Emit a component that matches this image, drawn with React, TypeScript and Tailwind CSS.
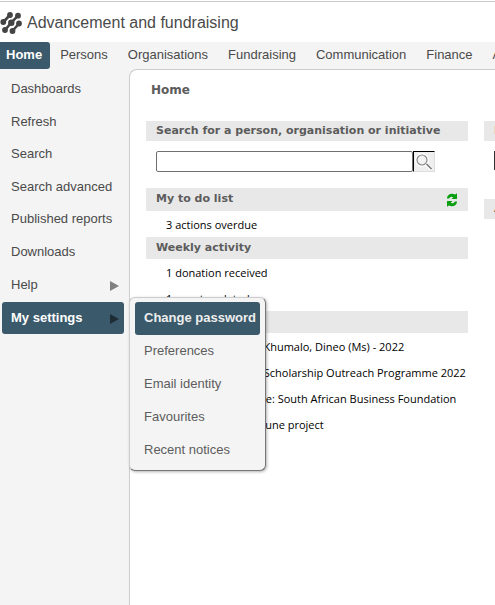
import type { ReactNode } from "react";

const tabs = ["Home", "Persons", "Organisations", "Fundraising", "Communication", "Finance", "Administration"];
const sideLinks = ["Dashboards", "Refresh", "Search", "Search advanced", "Published reports", "Downloads"];
const settings = ["Change password", "Preferences", "Email identity", "Favourites", "Recent notices"];

function Logo() {
  return (
    <svg viewBox="0 0 22 22" className="size-[22px] shrink-0" fill="#444" stroke="none" aria-hidden="true">
      <path d="M10 3 L3.300 10 M18 3.700 L11.300 10.700 L5 18 M19 11.500 L12.500 19" stroke="#444" strokeWidth="2.600" fill="none" />
      <circle cx="10" cy="3" r="2.900" />
      <circle cx="18" cy="3.700" r="2.900" />
      <circle cx="3.300" cy="10" r="2.900" />
      <circle cx="11.300" cy="10.700" r="3.200" />
      <circle cx="19" cy="11.500" r="2.900" />
      <circle cx="5" cy="18" r="2.900" />
      <circle cx="12.500" cy="19" r="2.900" />
    </svg>
  );
}

function Magnifier() {
  return (
    <svg viewBox="0 0 20 20" className="size-5 shrink-0" fill="none" aria-hidden="true">
      <circle cx="8" cy="8" r="5.500" stroke="#fff" strokeWidth="3" />
      <circle cx="8" cy="8" r="5" fill="#f4f4f4" stroke="#8a8a8a" strokeWidth="1.200" />
      <path d="M12 12 L17 17" stroke="#fff" strokeWidth="3.500" />
      <path d="M12.500 12 L17.500 17" stroke="#777" strokeWidth="1.600" />
    </svg>
  );
}

function RefreshIcon() {
  return (
    <svg viewBox="0 0 12 14" className="h-3.5 w-3" fill="#0a9e12" aria-hidden="true">
      <path d="M1 5.500 C1 1.500 5.500 -0.500 9 1.500 L11 0.300 V6 H5.500 L7.200 4.200 C5.500 3 4 3.800 3.200 5.500 Z" />
      <path d="M11 8.500 C11 12.500 6.500 14.500 3 12.500 L1 13.700 V8 H6.500 L4.800 9.800 C6.500 11 8 10.200 8.800 8.500 Z" />
    </svg>
  );
}

function Arrow({ className }: { className: string }) {
  return (
    <svg viewBox="0 0 10 10" className={"size-2.5 " + className} fill="currentColor" aria-hidden="true">
      <path d="M1 0 L10 5 L1 10 Z" />
    </svg>
  );
}

function Bar({ children, className = "h-[22px]" }: { children?: ReactNode; className?: string }) {
  return (
    <h2
      className={
        "flex items-center justify-between bg-[#e8e8e8] px-2.5 font-['Verdana','DejaVu_Sans',sans-serif] text-[11px] font-bold whitespace-nowrap text-[#5c5c5c] " +
        className
      }
    >
      {children}
    </h2>
  );
}

function Rows({ items }: { items: string[] }) {
  return (
    <ul>
      {items.map((t) => (
        <li key={t} className="h-[26px] pl-5 text-[11px] leading-7 whitespace-nowrap text-black">
          {t}
        </li>
      ))}
    </ul>
  );
}

export default function App() {
  return (
    <div className="flex min-h-screen flex-col overflow-hidden bg-white font-['Liberation_Sans',Arial,sans-serif] text-[13px] text-[#4a4a4a]">
      <header className="mt-px flex h-[41px] items-center gap-[5px] border-t border-[#ccc] pt-0.5">
        <Logo />
        <h1 className="text-base">Advancement and fundraising</h1>
      </header>
      <nav className="flex h-[27px] overflow-hidden bg-[#f4f4f4]">
        {tabs.map((t, i) => (
          <a
            key={t}
            href="#"
            className={
              i === 0
                ? "shrink-0 rounded-r-[3px] bg-[#3a596b] pr-2 pl-1.5 leading-[26px] font-bold text-white"
                : "shrink-0 px-2.5 leading-[26px]"
            }
          >
            {t}
          </a>
        ))}
      </nav>
      <div className="flex flex-1 bg-[#f4f4f4]">
        <aside className="w-[129px] shrink-0 pt-[5px] pr-[5px] pl-0.5">
          <ul className="flex h-[260px] flex-col justify-between">
            {sideLinks.map((t) => (
              <li key={t}>
                <a href="#" className="block h-8 pl-[9px] leading-[30px] whitespace-nowrap">
                  {t}
                </a>
              </li>
            ))}
            <li>
              <a href="#" className="flex h-8 items-center justify-between pr-[5px] pl-[9px] leading-[30px]">
                Help
                <Arrow className="mt-0.5 text-[#808080]" />
              </a>
            </li>
            <li className="relative">
              <a
                href="#"
                className="flex h-8 items-center justify-between rounded-[3px] bg-[#3a596b] pr-[5px] pl-[9px] leading-[30px] font-bold text-white"
              >
                My settings
                <Arrow className="mt-0.5 text-[#1d2c35]" />
              </a>
              <ul className="absolute -top-[5px] left-[127px] z-10 flex h-[174px] w-[137px] flex-col justify-between rounded-[6px] border border-[#ccc] border-r-[#777] border-b-[#777] bg-[#f4f4f4] px-[5px] py-1 shadow-[1px_1px_3px_rgba(0,0,0,0.3)]">
                {settings.map((t, i) => (
                  <li key={t}>
                    <a
                      href="#"
                      className={
                        i === 0
                          ? "block h-[33px] rounded-[3px] bg-[#3a596b] pl-[9px] leading-8 font-bold whitespace-nowrap text-[#eee]"
                          : "block h-[33px] pl-[9px] leading-[31px] whitespace-nowrap text-[#5c5c5c]"
                      }
                    >
                      {t}
                    </a>
                  </li>
                ))}
              </ul>
            </li>
          </ul>
        </aside>
        <main className="min-w-0 flex-1 overflow-hidden rounded-tl-[8px] border-t border-l border-[#ccc] bg-white pl-4 font-['Segoe_UI','Open_Sans','Noto_Sans',sans-serif]">
          <h2 className="h-[51px] pl-[5px] font-['Verdana','DejaVu_Sans',sans-serif] text-xs leading-[40px] font-bold text-[#5c5c5c]">
            Home
          </h2>
          <div className="flex gap-4">
            <section className="w-[322px] shrink-0">
              <Bar className="h-5">
                <label htmlFor="search">Search for a person, organisation or initiative</label>
              </Bar>
              <form className="flex h-[47px] items-start pt-2.5 pl-2.5">
                <input id="search" className="h-[21px] w-[257px] rounded-[2px] border border-[#707070] bg-white px-1 text-xs" />
                <button
                  type="button"
                  aria-label="Search"
                  className="flex h-[21px] w-[22px] items-center justify-center border border-[#ddd] border-t-black border-l-black bg-[#efefef]"
                >
                  <Magnifier />
                </button>
              </form>
              <Bar className="h-[23px]">
                My to do list
                <button type="button" aria-label="Refresh list">
                  <RefreshIcon />
                </button>
              </Bar>
              <Rows items={["3 actions overdue"]} />
              <Bar>Weekly activity</Bar>
              <Rows items={["1 donation received", "1 event updated"]} />
              <Bar />
              <Rows
                items={[
                  "Donation pledged: Khumalo, Dineo (Ms) - 2022",
                  "Initiative reported: Scholarship Outreach Programme 2022",
                  "Organisation change: South African Business Foundation",
                  "Fundraising plans: June project",
                ]}
              />
            </section>
            <section className="w-80 shrink-0">
              <Bar className="h-5">My initiatives</Bar>
              <div className="h-[58px] pt-2.5 pl-2.5">
                <select aria-label="Initiative" className="h-[19px] w-60 border border-[#333] bg-white" />
              </div>
              <Bar className="h-5">Activities</Bar>
            </section>
          </div>
        </main>
      </div>
    </div>
  );
}
